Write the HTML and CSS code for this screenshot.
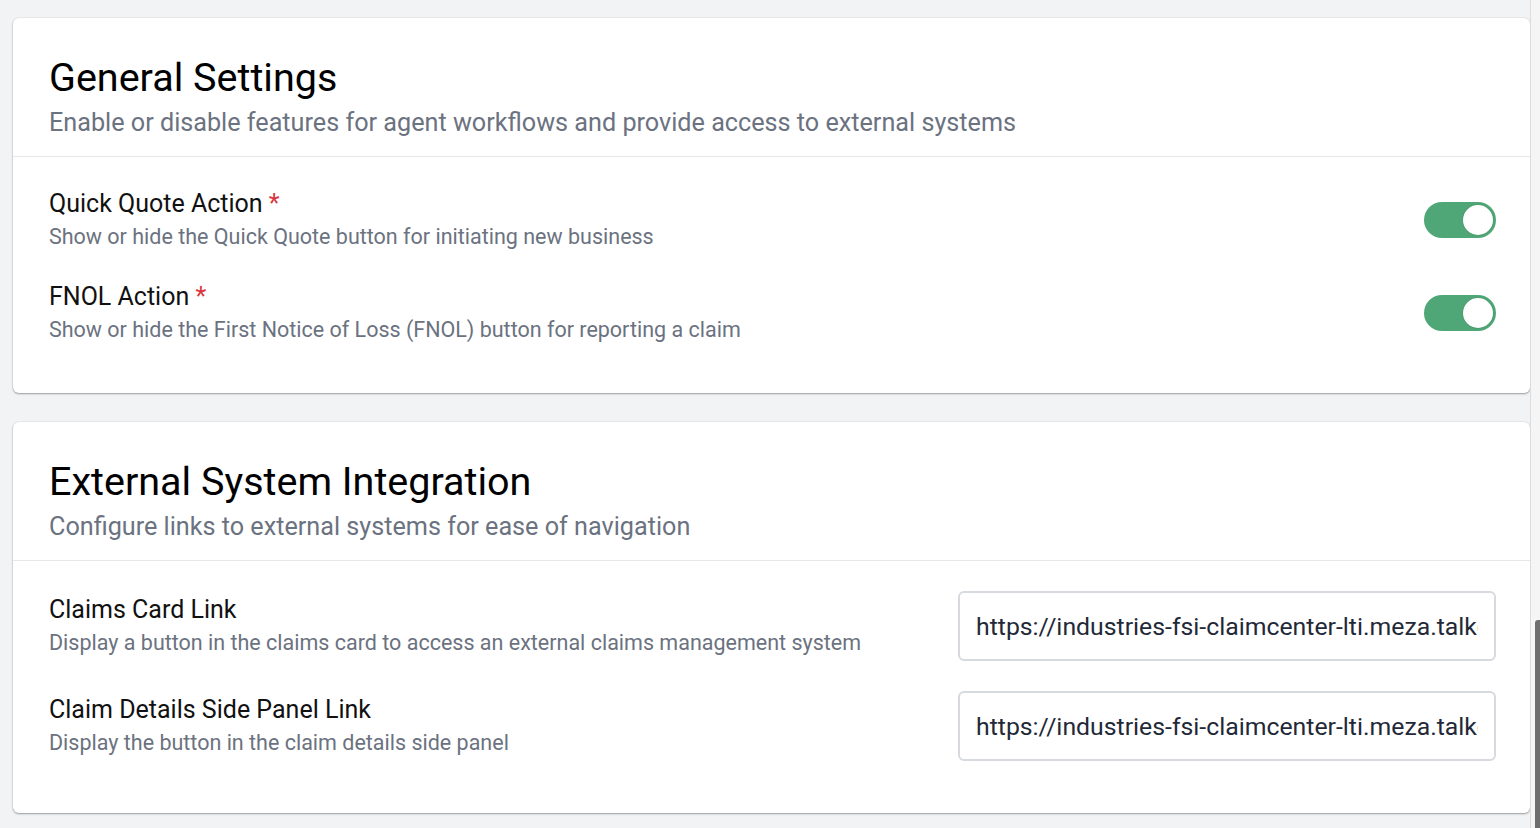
FILE: index.html
```html
<!DOCTYPE html>
<html lang="en">
<head>
  <meta charset="UTF-8" />
  <meta name="viewport" content="width=device-width, initial-scale=1.0" />
  <title>Settings</title>
  <link rel="stylesheet" href="styles.css">
</head>
<body>
  <main class="content">
    <section class="card">
      <div class="card-header">
        <h2 class="card-title">General Settings</h2>
        <p class="card-subtitle">Enable or disable features for agent workflows and provide access to external systems</p>
      </div>
      <div class="card-body">
        <div class="setting-row">
          <div class="setting-text">
            <div class="setting-label">Quick Quote Action <span class="required">*</span></div>
            <div class="setting-desc">Show or hide the Quick Quote button for initiating new business</div>
          </div>
          <label class="toggle">
            <input type="checkbox" checked>
            <span class="toggle-track"></span>
          </label>
        </div>
        <div class="setting-row">
          <div class="setting-text">
            <div class="setting-label">FNOL Action <span class="required">*</span></div>
            <div class="setting-desc">Show or hide the First Notice of Loss (FNOL) button for reporting a claim</div>
          </div>
          <label class="toggle">
            <input type="checkbox" checked>
            <span class="toggle-track"></span>
          </label>
        </div>
      </div>
    </section>

    <section class="card">
      <div class="card-header">
        <h2 class="card-title">External System Integration</h2>
        <p class="card-subtitle">Configure links to external systems for ease of navigation</p>
      </div>
      <div class="card-body card-body-links">
        <div class="setting-row">
          <div class="setting-text">
            <div class="setting-label">Claims Card Link</div>
            <div class="setting-desc">Display a button in the claims card to access an external claims management system</div>
          </div>
          <input class="link-input" type="text" value="https://industries-fsi-claimcenter-lti.meza.talkdesk.com/claims">
        </div>
        <div class="setting-row">
          <div class="setting-text">
            <div class="setting-label">Claim Details Side Panel Link</div>
            <div class="setting-desc">Display the button in the claim details side panel</div>
          </div>
          <input class="link-input" type="text" value="https://industries-fsi-claimcenter-lti.meza.talkdesk.com/claims">
        </div>
      </div>
    </section>
  </main>

  <div class="scroll-track">
    <div class="scroll-thumb"></div>
  </div>
</body>
</html>
```

FILE: styles.css
```css
html, body {
  margin: 0;
  padding: 0;
  height: 100vh;
  overflow: hidden;
}

body {
  display: flex;
  font-family: Roboto, "Liberation Sans", sans-serif;
  background-color: #f2f3f5;
  color: #111;
}

.content {
  flex: 1;
  display: flex;
  flex-direction: column;
  gap: 29px;
  padding: 18px 0 0 13px;
  min-width: 0;
}

.card {
  background: #fff;
  border-radius: 6px;
  box-shadow: 0 0 0 1px rgba(0,0,0,0.03), 0 1px 2px rgba(0,0,0,0.35);
}

.card-header {
  padding: 37px 34px 17px 36px;
  border-bottom: 1px solid #e5e7eb;
}

.card-title {
  margin: 0;
  font-size: 39.5px;
  font-weight: 400;
  line-height: 46px;
  color: #000;
}

.card-subtitle {
  margin: 6px 0 0;
  font-size: 25.2px;
  line-height: 32px;
  color: #6b7280;
}

.card-body {
  display: flex;
  flex-direction: column;
  gap: 27px;
  padding: 30px 34px 47px 36px;
}

.card-body-links {
  gap: 30px;
  padding-bottom: 52px;
}

.setting-row {
  display: flex;
  align-items: center;
  justify-content: space-between;
  gap: 24px;
}

.setting-label {
  font-size: 25px;
  line-height: 34px;
  color: #111;
}

.required {
  color: #d9363e;
}

.setting-desc {
  font-size: 21.5px;
  line-height: 32px;
  color: #6b7280;
}

/* toggle */
.toggle {
  position: relative;
  display: inline-block;
  width: 72px;
  height: 36px;
  flex-shrink: 0;
}

.toggle input {
  display: none;
}

.toggle-track {
  position: absolute;
  inset: 0;
  border-radius: 18px;
  background-color: #c9ccd1;
  cursor: pointer;
}

.toggle-track::after {
  content: "";
  position: absolute;
  top: 3px;
  left: 3px;
  width: 30px;
  height: 30px;
  border-radius: 50%;
  background: #fff;
  box-shadow: 0 0 2px rgba(0,0,0,0.15);
  transition: left 0.2s;
}

.toggle input:checked + .toggle-track {
  background-color: #4fa676;
}

.toggle input:checked + .toggle-track::after {
  left: 39px;
}

/* link inputs */
.link-input {
  width: 538px;
  height: 70px;
  box-sizing: border-box;
  padding: 0 16px;
  border: 2px solid #d6d9de;
  border-radius: 6px;
  font-family: Roboto, "Liberation Sans", sans-serif;
  font-size: 24.8px;
  color: #1f2937;
  background: #fff;
  flex-shrink: 0;
}

/* fake scrollbar on the right */
.scroll-track {
  width: 9px;
  border-left: 1px solid #dcdcdc;
  background: #f5f5f5;
  display: flex;
  flex-direction: column;
  align-items: flex-end;
}

.scroll-thumb {
  margin-top: 620px;
  width: 5px;
  flex: 1;
  background: #6e6e6e;
  border-radius: 3px 0 0 0;
}
```
